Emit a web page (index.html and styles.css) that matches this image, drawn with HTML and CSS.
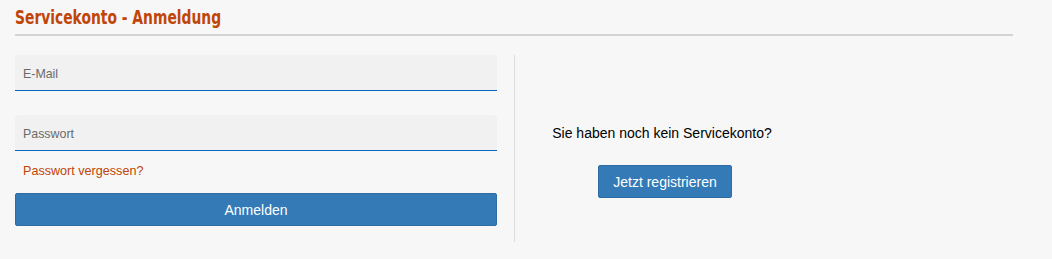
FILE: index.html
```html
<!DOCTYPE html>
<html lang="de">
<head>
<meta charset="utf-8">
<title>Servicekonto - Anmeldung</title>
<link rel="stylesheet" href="styles.css">
</head>
<body>
<div class="page">
  <h1 class="title"><span class="title-text">Servicekonto - Anmeldung</span></h1>
  <div class="panels">
    <form class="login">
      <input class="field" type="email" placeholder="E-Mail">
      <input class="field field-pw" type="password" placeholder="Passwort">
      <a class="forgot" href="#">Passwort vergessen?</a>
      <button class="btn btn-wide" type="button">Anmelden</button>
    </form>
    <div class="register">
      <p class="register-text">Sie haben noch kein Servicekonto?</p>
      <button class="btn btn-reg" type="button">Jetzt registrieren</button>
    </div>
  </div>
</div>
</body>
</html>
```
FILE: styles.css
```css
html, body {
  margin: 0;
  padding: 0;
  background: #f7f7f7;
}
body {
  font-family: "Liberation Sans", Arial, sans-serif;
  color: #000;
}
.page {
  width: 998px;
  padding-left: 15px;
}
.title {
  margin: 0;
  box-sizing: border-box;
  height: 36px;
  padding-top: 5px;
  font-family: "DejaVu Sans Condensed", sans-serif;
  font-weight: bold;
  font-size: 19.5px;
  line-height: 25px;
  color: #bf4508;
  border-bottom: 2px solid #d4d4d4;
}
.title-text {
  display: inline-block;
  transform: scaleX(0.79);
  transform-origin: left center;
  white-space: nowrap;
}
.panels {
  display: flex;
  padding-top: 19px;
}
.login {
  width: 482px;
  display: flex;
  flex-direction: column;
  margin: 0;
  padding-bottom: 16px;
}
.field {
  box-sizing: border-box;
  height: 36px;
  width: 100%;
  border: none;
  border-bottom: 1px solid #0a66c2;
  border-radius: 3px 3px 0 0;
  background: #f1f1f1;
  padding: 3px 8px 0;
  font-family: "Liberation Sans", Arial, sans-serif;
  font-size: 12.4px;
  color: #333;
  outline: none;
}
.field::placeholder {
  color: #6b6b6b;
}
.field-pw {
  margin-top: 24px;
}
.forgot {
  margin: 13px 0 0 8px;
  font-size: 12.6px;
  line-height: 15px;
  color: #c04406;
  text-decoration: none;
}
.btn {
  background: #337ab7;
  color: #fff;
  border: 1px solid #2e6da4;
  border-radius: 2px;
  font-family: "Liberation Sans", Arial, sans-serif;
  font-size: 14px;
  height: 33px;
  padding: 0 12px;
  cursor: pointer;
}
.btn-wide {
  margin-top: 14px;
  width: 100%;
}
.register {
  margin-left: 17px;
  width: 300px;
  border-left: 1px solid #dcdcdc;
  display: flex;
  flex-direction: column;
  align-items: center;
}
.register-text {
  margin: 68px 6px 0 0;
  font-size: 14px;
  line-height: 20px;
}
.btn-reg {
  margin-top: 22px;
  width: 134px;
}
```
